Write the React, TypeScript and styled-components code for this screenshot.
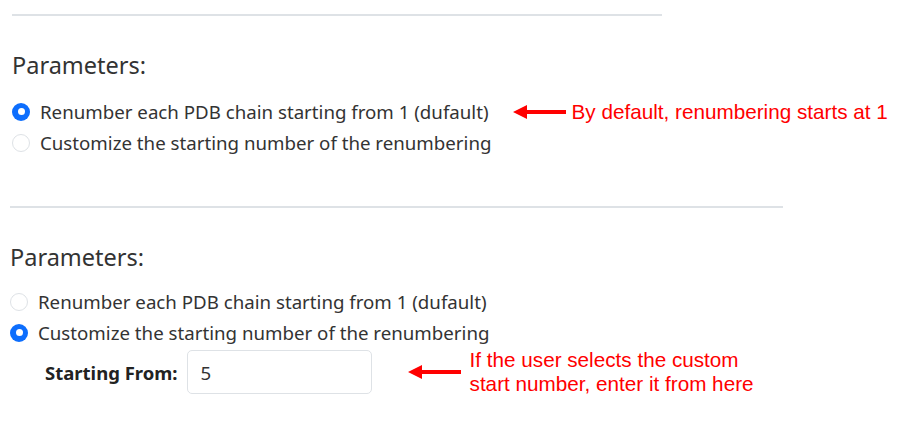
import React, { FC } from 'react';
import styled, { createGlobalStyle } from 'styled-components';

const GlobalStyle = createGlobalStyle`
  body {
    margin: 0;
    background: #ffffff;
    font-family: 'Noto Sans', 'Open Sans', sans-serif;
    color: #212529;
  }
`;

const Page = styled.div`
  width: 912px;
  height: 425px;
  overflow: hidden;
  display: flex;
  flex-direction: column;
`;

const Section = styled.section<{ inset: number; top: number; ruleWidth: number }>`
  display: flex;
  flex-direction: column;
  padding-left: ${({ inset }) => inset}px;
  padding-top: ${({ top }) => top}px;
  & > hr {
    width: ${({ ruleWidth }) => ruleWidth}px;
  }
`;

const Rule = styled.hr`
  margin: 0;
  border: 0;
  border-top: 2px solid #dee2e6;
`;

const Heading = styled.div<{ top: number }>`
  margin-top: ${({ top }) => top}px;
  font-size: 23.5px;
  line-height: 30px;
  color: #333;
`;

const Options = styled.div<{ top: number }>`
  margin-top: ${({ top }) => top}px;
  display: flex;
  flex-direction: column;
`;

const Row = styled.label`
  display: flex;
  align-items: center;
  height: 31px;
  gap: 10px;
  font-size: 18.7px;
  color: #333;
  white-space: nowrap;
`;

const Radio = styled.span<{ checked: boolean }>`
  width: 18px;
  height: 18px;
  box-sizing: border-box;
  border-radius: 50%;
  flex: none;
  border: ${({ checked }) => (checked ? 'none' : '1px solid #dee2e6')};
  background: ${({ checked }) => (checked ? '#0d6efd' : '#fff')};
  display: flex;
  align-items: center;
  justify-content: center;
  &::after {
    content: '';
    display: ${({ checked }) => (checked ? 'block' : 'none')};
    width: 7px;
    height: 7px;
    border-radius: 50%;
    background: #fff;
  }
`;

const Note = styled.div<{ left: number; gap: number }>`
  display: flex;
  align-items: center;
  margin-left: ${({ left }) => left}px;
  gap: ${({ gap }) => gap}px;
`;

const NoteText = styled.div`
  font-family: 'Liberation Sans', Arial, sans-serif;
  font-size: 20.7px;
  line-height: 24px;
  color: #ff0000;
  white-space: nowrap;
`;

const FieldRow = styled.div`
  display: flex;
  align-items: center;
  padding-left: 35px;
`;

const FieldLabel = styled.span`
  font-size: 18.5px;
  font-weight: 700;
  color: #222;
  margin-right: 9px;
`;

const Input = styled.input`
  width: 185px;
  height: 44px;
  box-sizing: border-box;
  border: 1px solid #dee2e6;
  border-radius: 5px;
  padding: 0 13px;
  font-family: 'Noto Sans', sans-serif;
  font-size: 18.7px;
  color: #333;
  outline: none;
`;

const Arrow: FC = () => (
  <svg width="53" height="14" viewBox="0 0 53 14">
    <rect x="13" y="5" width="40" height="4" fill="#ff0000" />
    <polygon points="0,7 14,0 14,14" fill="#ff0000" />
  </svg>
);

const App: FC = () => (
  <Page>
    <GlobalStyle />
    <Section inset={12} top={14} ruleWidth={650}>
      <Rule />
      <Heading top={34}>Parameters:</Heading>
      <Options top={16}>
        <Row>
          <Radio checked />
          Renumber each PDB chain starting from 1 (dufault)
          <Note left={14} gap={6}>
            <Arrow />
            <NoteText>By default, renumbering starts at 1</NoteText>
          </Note>
        </Row>
        <Row>
          <Radio checked={false} />
          Customize the starting number of the renumbering
        </Row>
      </Options>
    </Section>
    <Section inset={10} top={48} ruleWidth={773}>
      <Rule />
      <Heading top={34}>Parameters:</Heading>
      <Options top={14}>
        <Row>
          <Radio checked={false} />
          Renumber each PDB chain starting from 1 (dufault)
        </Row>
        <Row>
          <Radio checked />
          Customize the starting number of the renumbering
        </Row>
      </Options>
      <FieldRow>
        <FieldLabel>Starting From:</FieldLabel>
        <Input defaultValue="5" />
        <Note left={36} gap={9}>
          <Arrow />
          <NoteText>
            If the user selects the custom
            <br />
            start number, enter it from here
          </NoteText>
        </Note>
      </FieldRow>
    </Section>
  </Page>
);

export default App;
